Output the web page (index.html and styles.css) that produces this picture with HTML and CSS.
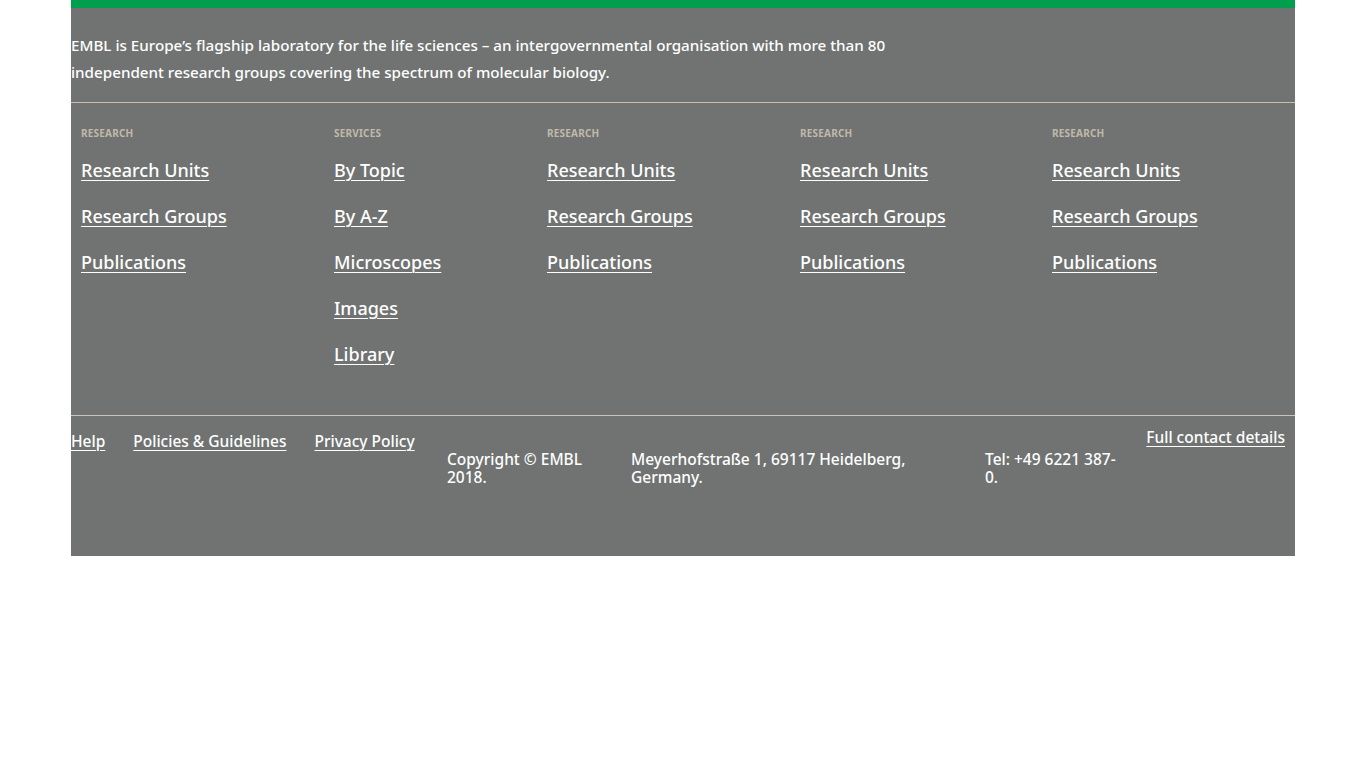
FILE: index.html
```html
<!DOCTYPE html>
<html lang="en">
<head>
<meta charset="utf-8">
<title>EMBL footer</title>
<link rel="stylesheet" href="styles.css">
</head>
<body>
<footer class="footer">
  <div class="intro">
    <p>EMBL is Europe’s flagship laboratory for the life sciences – an intergovernmental organisation with more than 80 independent research groups covering the spectrum of molecular biology.</p>
  </div>
  <nav class="nav">
    <div class="col col-wide">
      <h4 class="label">Research</h4>
      <ul class="links">
        <li><a href="#">Research Units</a></li>
        <li><a href="#">Research Groups</a></li>
        <li><a href="#">Publications</a></li>
      </ul>
    </div>
    <div class="col col-narrow">
      <h4 class="label">Services</h4>
      <ul class="links">
        <li><a href="#">By Topic</a></li>
        <li><a href="#">By A-Z</a></li>
        <li><a href="#">Microscopes</a></li>
        <li><a href="#">Images</a></li>
        <li><a href="#">Library</a></li>
      </ul>
    </div>
    <div class="col col-wide">
      <h4 class="label">Research</h4>
      <ul class="links">
        <li><a href="#">Research Units</a></li>
        <li><a href="#">Research Groups</a></li>
        <li><a href="#">Publications</a></li>
      </ul>
    </div>
    <div class="col col-mid">
      <h4 class="label">Research</h4>
      <ul class="links">
        <li><a href="#">Research Units</a></li>
        <li><a href="#">Research Groups</a></li>
        <li><a href="#">Publications</a></li>
      </ul>
    </div>
    <div class="col col-wide">
      <h4 class="label">Research</h4>
      <ul class="links">
        <li><a href="#">Research Units</a></li>
        <li><a href="#">Research Groups</a></li>
        <li><a href="#">Publications</a></li>
      </ul>
    </div>
  </nav>
  <div class="legal">
    <ul class="legal-links">
      <li><a href="#">Help</a></li>
      <li><a href="#">Policies &amp; Guidelines</a></li>
      <li><a href="#">Privacy Policy</a></li>
    </ul>
    <p class="legal-item copyright">Copyright © EMBL 2018.</p>
    <p class="legal-item address">Meyerhofstraße 1, 69117 Heidelberg, Germany.</p>
    <p class="legal-item tel">Tel: +49 6221 387-0.</p>
    <a class="contact" href="#">Full contact details</a>
  </div>
</footer>
</body>
</html>
```
FILE: styles.css
```css
* { box-sizing: border-box; }

html, body {
  margin: 0;
  padding: 0;
  background: #ffffff;
}

body {
  font-family: "Noto Sans", "Open Sans", sans-serif;
  color: #ffffff;
}

.footer {
  width: 1224px;
  margin: 0 auto;
  background: #707372;
  border-top: 8px solid #009f4d;
  padding-bottom: 70px;
}

.intro {
  padding: 24px 0 16px;
}

.intro p {
  margin: 0;
  max-width: 900px;
  font-size: 15.2px;
  line-height: 27px;
  font-weight: 500;
}

.nav {
  display: flex;
  border-top: 1px solid #c9bfb0;
  padding: 24px 0 38px;
}

.col {
  padding: 0 10px;
}
.col-wide { width: 253px; }
.col-narrow { width: 213px; }
.col-mid { width: 252px; }

.label {
  margin: 0 0 8px;
  font-size: 10px;
  line-height: 12px;
  font-weight: 700;
  text-transform: uppercase;
  color: #c1b9aa;
  letter-spacing: 0.2px;
}

.links {
  list-style: none;
  margin: 0;
  padding: 0;
}

.links li {
  font-size: 18px;
  line-height: 46px;
  font-weight: 500;
}

a {
  color: #ffffff;
  text-decoration: underline;
  text-underline-offset: 3px;
  text-decoration-thickness: 1px;
}

.legal {
  display: flex;
  align-items: flex-start;
  border-top: 1px solid #c9c3ba;
  padding-top: 11px;
}

.legal-links {
  list-style: none;
  margin: 4px 0 0;
  padding: 0;
  width: 376px;
  flex-shrink: 0;
  display: flex;
  gap: 28px;
  font-size: 15.5px;
  line-height: 20px;
  font-weight: 500;
}

.legal-item {
  margin: 23px 0 0;
  font-size: 15.5px;
  line-height: 18px;
  font-weight: 500;
  flex-shrink: 0;
}

.copyright { width: 184px; padding-right: 30px; }
.address { width: 354px; padding-right: 40px; }
.tel { width: 162px; padding-right: 20px; flex-shrink: 1; }

.contact {
  margin-left: auto;
  margin-right: 10px;
  white-space: nowrap;
  font-size: 15.5px;
  line-height: 20px;
  font-weight: 500;
}
```
